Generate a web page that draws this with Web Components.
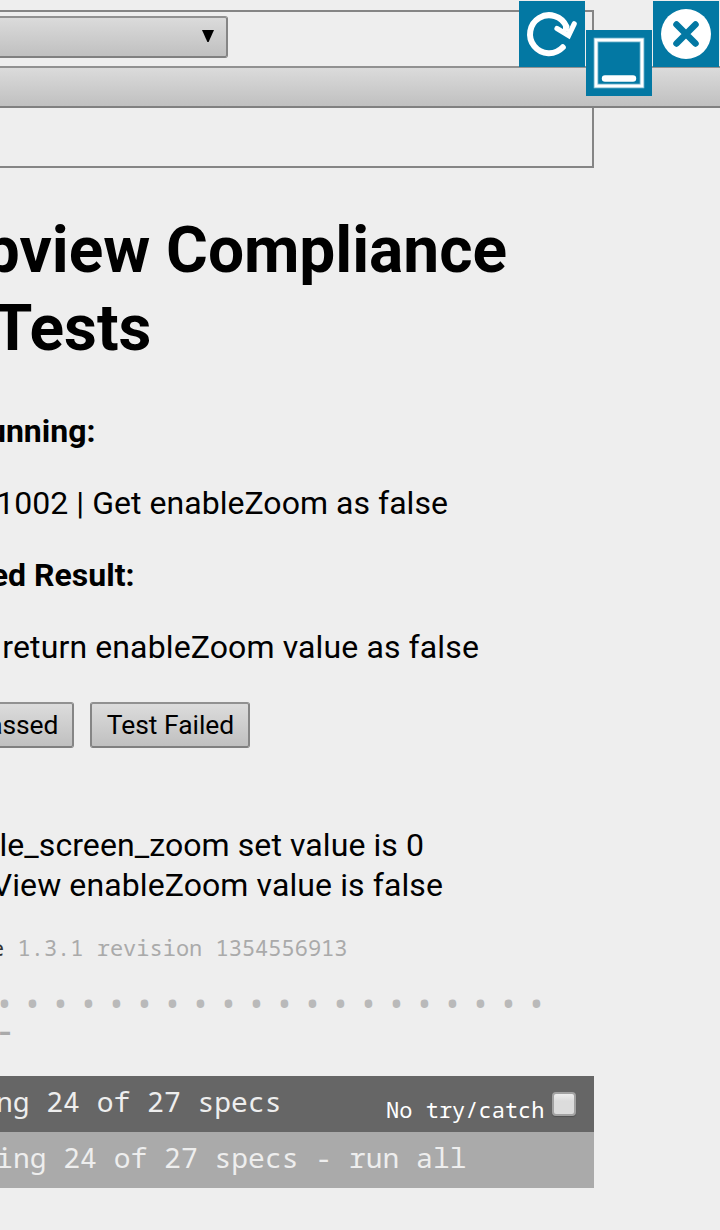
<!DOCTYPE html>
<html lang="en">
<head>
<meta charset="utf-8">
<title>Webview Compliance Tests</title>
<style>
html,body{margin:0;padding:0;background:#eee}
body{width:720px;height:1230px;overflow:hidden;font-family:Roboto,"Noto Sans",sans-serif;color:#000}
</style>
</head>
<body>
<compliance-page></compliance-page>
<script>
const define=(name,html)=>customElements.define(name,class extends HTMLElement{
  constructor(){super();this.attachShadow({mode:'open'}).innerHTML=html;}
});
/* One line of text that ends at --end and runs out of the view on the left. */
define('clip-line',`<style>
:host{display:flex;justify-content:flex-end;width:var(--end);height:var(--line,40px);line-height:var(--line,40px);font-size:var(--size,32px);white-space:pre}
span{flex:none}
</style><span><slot></slot></span>`);
define('grey-button',`<style>
:host{display:flex;box-sizing:border-box;height:46px;border:2px solid;border-color:#919191 #858585 #808080 #858585;border-radius:3px;background:linear-gradient(#dcdcdc,#c0c0c0);align-items:center;justify-content:flex-end;font-size:26.4px;line-height:30px;white-space:pre;padding:0 13.8px 1px 0}
span{flex:none}
</style><span><slot></slot></span>`);
define('select-bar',`<style>
:host{display:block}
.top,.bottom{box-sizing:border-box;width:594px;border-right:2px solid #858585}
.top{height:56px;border-top:2px solid #858585;padding-top:4px}
.bottom{height:60px;border-bottom:2px solid #858585}
.bar{box-sizing:border-box;height:42px;border:solid;border-width:2px 0;border-color:#919191 #808080 #808080;background:linear-gradient(#dbdbdb,#c0c0c0)}
.select{box-sizing:border-box;width:228px;height:42px;border:2px solid;border-left:0;border-color:#919191 #858585 #808080;border-radius:0 3px 3px 0;background:linear-gradient(#dbdbdb,#c0c0c0);display:flex;justify-content:flex-end;padding:12px 12px 0 0}
svg{display:block}
</style><div class="top"><div class="select"><svg width="12" height="12"><path d="M0 0H12L6.6 12H5.4Z"/></svg></div></div><div class="bar"></div><div class="bottom"></div>`);
define('window-controls',`<style>
:host{display:block}
svg{position:absolute;display:block;background:#0378a3}
.r{left:519px;top:1px}.m{left:586px;top:30px}.c{left:653px;top:1px}
</style>
<svg class="r" width="66" height="66" fill="none" stroke="#fff"><path d="M43.8 46.3A19 19 0 1 1 47.4 25.5" stroke-width="6" stroke-linecap="round"/><path d="M38 27.6L49.6 34.5L55.2 22.8" stroke-width="5.2" stroke-linecap="round"/><path d="M44 23L49 25L51 32L44 29Z" fill="#fff" stroke="none"/></svg>
<svg class="m" width="66" height="66" fill="none" stroke="#fff"><rect x="10" y="10" width="46" height="46" stroke="#8cc3d8" stroke-width="4.6"/><rect x="10" y="10" width="46" height="46" stroke-width="2.8"/><path d="M19 48.5H47" stroke-width="6.4" stroke-linecap="round"/></svg>
<svg class="c" width="66" height="66"><circle cx="33" cy="33" r="25" fill="#fff"/><path d="M23.5 23.5L42.5 42.5M42.5 23.5L23.5 42.5" fill="none" stroke="#0378a3" stroke-width="6.5" stroke-linecap="round"/></svg>`);
define('jasmine-report',`<style>
:host{display:block;font-family:"Droid Sans Mono","Noto Sans Mono","DejaVu Sans Mono",monospace}
.v{--end:347.5px;--size:22px;--line:30px;color:#aaa}
.v b{font-weight:400;color:#333}
.dots{display:flex;margin:26px 0 0 -9.5px;height:28px;color:#b9b9b9}
.dots span{width:28px;text-align:center;font-size:34px;line-height:30px}
.dash{--end:12.5px;--size:25px;--line:28px;color:#aaa;font-weight:700}
.bar{width:594px;height:56px;display:flex;justify-content:space-between;background:#666;color:#eee}
.one{margin-top:32px}.two{background:#aaa}
.bar clip-line{--size:28px;--line:50px}
.catch{display:flex;align-items:flex-start;color:#fff;font-size:22px;line-height:66px;padding-right:18px}
.box{box-sizing:border-box;width:24px;height:24px;margin:16px 0 0 7.5px;border:2px solid #a2a2a2;border-radius:4px;background:linear-gradient(#eee,#dcdcdc 35%);box-shadow:0 1px 1px #505050}
</style>
<clip-line class="v"><b>e</b> 1.3.1 revision 1354556913</clip-line>
<div class="dots">${'<span>•</span>'.repeat(20)}</div>
<clip-line class="dash">–</clip-line>
<div class="bar one"><clip-line style="--end:281.5px">ng 24 of 27 specs</clip-line><div class="catch"><span>No try/catch</span><div class="box"></div></div></div>
<div class="bar two"><clip-line style="--end:466.5px">ing 24 of 27 specs - run all</clip-line></div>`);
define('compliance-page',`<style>
:host{display:block;position:relative;height:1230px;padding-top:10px;box-sizing:border-box;overflow:hidden}
h1{margin:44px 0 43px;font-size:64px;font-weight:700}
h1 clip-line{--size:64px;--line:78px}
.h{font-weight:700}
.info{display:flex;flex-direction:column;gap:32px}
.buttons{display:flex;gap:16px;margin:35px 0 77px -20px}
</style>
<select-bar></select-bar>
<h1><clip-line style="--end:507px;letter-spacing:-.04px">bview Compliance</clip-line><clip-line style="--end:151.5px">Tests</clip-line></h1>
<div class="info">
<clip-line class="h" style="--end:95.5px">unning:</clip-line>
<clip-line style="--end:448px;letter-spacing:.04px">1002 | Get enableZoom as false</clip-line>
<clip-line class="h" style="--end:134.5px">ed Result:</clip-line>
<clip-line style="--end:479px;letter-spacing:.12px">return enableZoom value as false</clip-line>
</div>
<div class="buttons"><grey-button style="width:94px;letter-spacing:-.1px">assed</grey-button><grey-button style="width:160px">Test Failed</grey-button></div>
<clip-line style="--end:424px;letter-spacing:.08px">le_screen_zoom set value is 0</clip-line>
<clip-line style="--end:443px;letter-spacing:.1px">View enableZoom value is false</clip-line>
<jasmine-report style="margin-top:27px"></jasmine-report>
<window-controls></window-controls>`);
</script>
</body>
</html>
